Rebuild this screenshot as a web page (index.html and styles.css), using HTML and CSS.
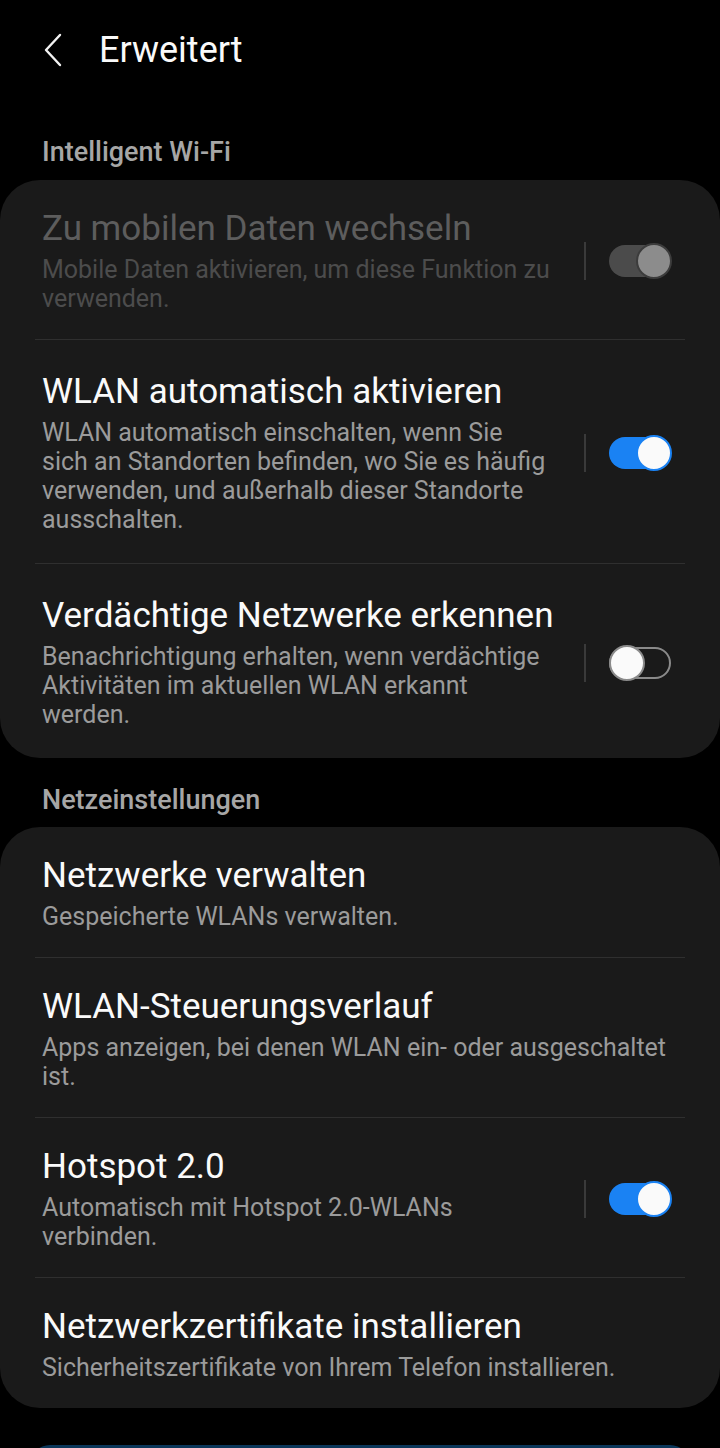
FILE: index.html
```html
<!DOCTYPE html>
<html lang="de">
<head>
  <meta charset="UTF-8" />
  <meta name="viewport" content="width=device-width, initial-scale=1.0"/>
  <title>Erweitert</title>
  <link rel="stylesheet" href="styles.css">
</head>
<body>
  <div class="header">
    <svg class="back" width="24" height="40" viewBox="0 0 24 40">
      <path d="M18 5 L4 20 L18 35" fill="none" stroke="#f2f2f2" stroke-width="2.4" stroke-linecap="round" stroke-linejoin="round"/>
    </svg>
    <h1>Erweitert</h1>
  </div>

  <div class="section-title">Intelligent Wi-Fi</div>
  <div class="card">
    <div class="row disabled">
      <div class="text">
        <div class="title">Zu mobilen Daten wechseln</div>
        <div class="sub">Mobile Daten aktivieren, um diese Funktion zu verwenden.</div>
      </div>
      <div class="divider"></div>
      <div class="switch switch-disabled"><span class="knob"></span></div>
    </div>
    <div class="row row-lg">
      <div class="text">
        <div class="title">WLAN automatisch aktivieren</div>
        <div class="sub">WLAN automatisch einschalten, wenn Sie sich an Standorten befinden, wo Sie es häufig verwenden, und außerhalb dieser Standorte ausschalten.</div>
      </div>
      <div class="divider"></div>
      <div class="switch switch-on"><span class="knob"></span></div>
    </div>
    <div class="row row-lg">
      <div class="text">
        <div class="title">Verdächtige Netzwerke erkennen</div>
        <div class="sub">Benachrichtigung erhalten, wenn verdächtige Aktivitäten im aktuellen WLAN erkannt werden.</div>
      </div>
      <div class="divider"></div>
      <div class="switch switch-off"><span class="knob"></span></div>
    </div>
  </div>

  <div class="section-title">Netzeinstellungen</div>
  <div class="card">
    <div class="row">
      <div class="text">
        <div class="title">Netzwerke verwalten</div>
        <div class="sub">Gespeicherte WLANs verwalten.</div>
      </div>
    </div>
    <div class="row">
      <div class="text">
        <div class="title">WLAN-Steuerungsverlauf</div>
        <div class="sub">Apps anzeigen, bei denen WLAN ein- oder ausgeschaltet ist.</div>
      </div>
    </div>
    <div class="row">
      <div class="text">
        <div class="title">Hotspot 2.0</div>
        <div class="sub">Automatisch mit Hotspot 2.0-WLANs verbinden.</div>
      </div>
      <div class="divider"></div>
      <div class="switch switch-on"><span class="knob"></span></div>
    </div>
    <div class="row">
      <div class="text">
        <div class="title">Netzwerkzertifikate installieren</div>
        <div class="sub">Sicherheitszertifikate von Ihrem Telefon installieren.</div>
      </div>
    </div>
  </div>

  <div class="bottom-bar"></div>
</body>
</html>
```

FILE: styles.css
```css
:root {
  --bg: #000;
  --card: #1a1a1a;
  --line: #2f2f2f;
  --text: #fafafa;
  --sub: #9b9b9b;
  --head: #a6a6a6;
  --blue: #1a82f3;
}
body {
  background: var(--bg);
  font-family: Roboto, 'Noto Sans', sans-serif;
  margin: 0;
  padding: 0;
  height: 1448px;
  overflow: hidden;
}
.header {
  display: flex;
  align-items: center;
  height: 100px;
  padding-left: 42px;
}
.back {
  margin-right: 33px;
}
.header h1 {
  margin: 0;
  font-size: 36px;
  font-weight: 400;
  color: var(--text);
}
.section-title {
  padding: 38px 42px 0 42px;
  height: 28px;
  line-height: 28px;
  font-size: 27px;
  font-weight: 500;
  color: var(--head);
  margin-bottom: 14px;
}
.card + .section-title {
  padding-top: 28px;
  margin-bottom: 13px;
}
.card {
  background: var(--card);
  border-radius: 40px;
  padding: 0 35px;
}
.row {
  display: flex;
  align-items: center;
  padding: 29px 7px 26px 7px;
  border-bottom: 1px solid var(--line);
}
.row-lg {
  padding-top: 32px;
  padding-bottom: 29px;
}
.row:last-child {
  border-bottom: none;
}
.text {
  flex: 1;
  min-width: 0;
}
.title {
  font-size: 35px;
  line-height: 40px;
  color: var(--text);
  margin-bottom: 6px;
  white-space: nowrap;
}
.sub {
  font-size: 25px;
  line-height: 29px;
  color: var(--sub);
}
.disabled .title {
  color: #5d5d5d;
}
.disabled .sub {
  color: #4c4c4c;
}
.divider {
  width: 2px;
  height: 38px;
  background: #3a3a3a;
  margin: 0 23px 0 33px;
}
/* toggle switches */
.switch {
  position: relative;
  width: 63px;
  height: 36px;
  margin-right: 6px;
}
.switch::before {
  content: "";
  position: absolute;
  left: 0;
  right: 1px;
  top: 2px;
  bottom: 2px;
  border-radius: 16px;
  box-sizing: border-box;
}
.knob {
  position: absolute;
  top: 0;
  width: 36px;
  height: 36px;
  border-radius: 50%;
  box-sizing: border-box;
}
.switch-on::before {
  background: var(--blue);
}
.switch-on .knob {
  right: 0;
  background: #fafafa;
  border: 2px solid var(--blue);
}
.switch-off::before {
  border: 2px solid #8a8a8a;
}
.switch-off .knob {
  left: 0;
  background: #fafafa;
  border: 2px solid #8a8a8a;
}
.switch-disabled::before {
  background: #4b4b4b;
}
.switch-disabled .knob {
  right: 0;
  background: #8c8c8c;
  border: 2px solid #3c3c3c;
}
.bottom-bar {
  margin: 37px 30px 0 30px;
  height: 40px;
  border-radius: 20px;
  background: #0b3659;
}
```
